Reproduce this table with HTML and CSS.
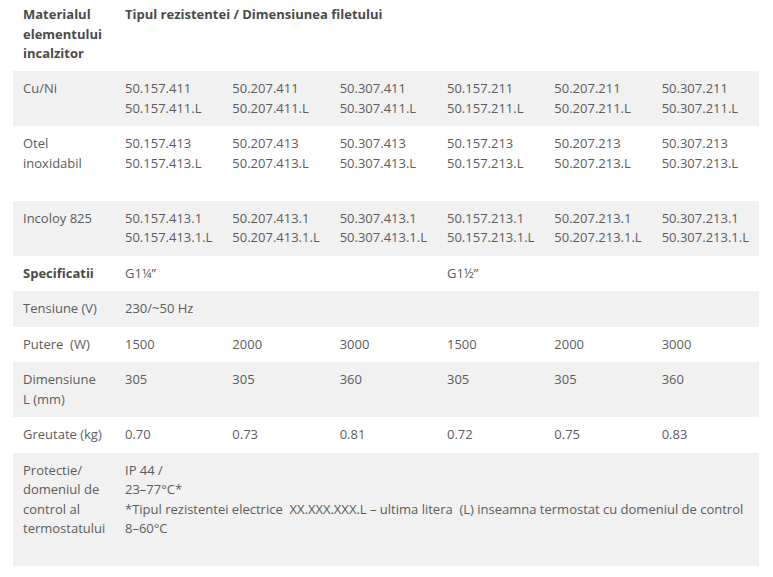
FILE: index.html
```html
<!DOCTYPE html>
<html lang="ro">
<head>
<meta charset="utf-8">
<title>Specificatii rezistente</title>
<link rel="stylesheet" href="styles.css">
</head>
<body>
<table class="spec">
  <colgroup>
    <col class="c-label">
    <col class="c-val"><col class="c-val"><col class="c-val">
    <col class="c-val"><col class="c-val"><col class="c-val">
  </colgroup>
  <thead>
    <tr class="row-head">
      <th>Materialul elementului incalzitor</th>
      <th colspan="6">Tipul rezistentei / Dimensiunea filetului</th>
    </tr>
  </thead>
  <tbody>
    <tr class="alt">
      <td>Cu/Ni</td>
      <td>50.157.411<br>50.157.411.L</td>
      <td>50.207.411<br>50.207.411.L</td>
      <td>50.307.411<br>50.307.411.L</td>
      <td>50.157.211<br>50.157.211.L</td>
      <td>50.207.211<br>50.207.211.L</td>
      <td>50.307.211<br>50.307.211.L</td>
    </tr>
    <tr>
      <td>Otel inoxidabil</td>
      <td>50.157.413<br>50.157.413.L</td>
      <td>50.207.413<br>50.207.413.L</td>
      <td>50.307.413<br>50.307.413.L</td>
      <td>50.157.213<br>50.157.213.L</td>
      <td>50.207.213<br>50.207.213.L</td>
      <td>50.307.213<br>50.307.213.L<br>&nbsp;</td>
    </tr>
    <tr class="alt">
      <td>Incoloy 825</td>
      <td>50.157.413.1<br>50.157.413.1.L</td>
      <td>50.207.413.1<br>50.207.413.1.L</td>
      <td>50.307.413.1<br>50.307.413.1.L</td>
      <td>50.157.213.1<br>50.157.213.1.L</td>
      <td>50.207.213.1<br>50.207.213.1.L</td>
      <td>50.307.213.1<br>50.307.213.1.L</td>
    </tr>
    <tr>
      <th>Specificatii</th>
      <td colspan="3">G1¼”</td>
      <td colspan="3">G1½”</td>
    </tr>
    <tr class="alt">
      <td>Tensiune (V)</td>
      <td colspan="6">230/~50 Hz</td>
    </tr>
    <tr>
      <td>Putere &nbsp;(W)</td>
      <td>1500</td>
      <td>2000</td>
      <td>3000</td>
      <td>1500</td>
      <td>2000</td>
      <td>3000</td>
    </tr>
    <tr class="alt">
      <td>Dimensiune L (mm)</td>
      <td>305</td>
      <td>305</td>
      <td>360</td>
      <td>305</td>
      <td>305</td>
      <td>360</td>
    </tr>
    <tr>
      <td>Greutate (kg)</td>
      <td>0.70</td>
      <td>0.73</td>
      <td>0.81</td>
      <td>0.72</td>
      <td>0.75</td>
      <td>0.83</td>
    </tr>
    <tr class="alt">
      <td>Protectie/ domeniul de control al termostatului</td>
      <td colspan="6">IP 44 /<br>23–77°C*<br>*Tipul rezistentei electrice &nbsp;XX.XXX.XXX.L – ultima litera &nbsp;(L) inseamna termostat cu domeniul de control<br>8–60°C<br>&nbsp;</td>
    </tr>
  </tbody>
</table>
</body>
</html>
```

FILE: styles.css
```css
html, body {
  margin: 0;
  padding: 0;
  background: #ffffff;
}

body {
  font-family: "Open Sans", "DejaVu Sans", sans-serif;
  font-size: 13px;
  line-height: 19.5px;
  color: #5c5c5c;
}

.spec {
  margin: 0 14px 0 13px;
  width: 746px;
  border-collapse: collapse;
  border-spacing: 0;
  table-layout: fixed;
}

.c-label {
  width: 102px;
}

.spec td,
.spec th {
  padding: 8px 10px 8px 10px;
  text-align: left;
  vertical-align: top;
  font-weight: 400;
}

.spec th {
  font-weight: 700;
  color: #4a4a4a;
}

.row-head th {
  padding-top: 5px;
  padding-bottom: 7.5px;
}

.alt {
  background: #f1f1f1;
}
```
